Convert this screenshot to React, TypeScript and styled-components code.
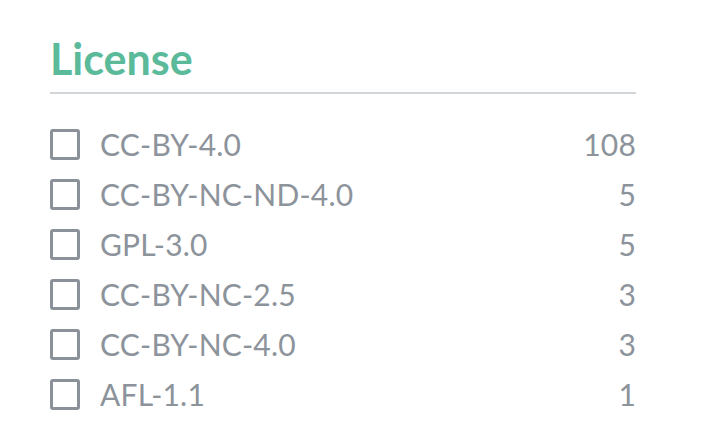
import React from "react";
import styled, { createGlobalStyle } from "styled-components";

const Global = createGlobalStyle`
  body { margin: 0; background: #fff; font-family: "Lato", "Noto Sans", sans-serif; }
`;

const Panel = styled.section`
  width: 586px;
  padding: 34px 0 0 50px;
`;

const Title = styled.h2`
  margin: 0;
  font-size: 43px;
  font-weight: 700;
  color: #5bba9a;
  line-height: 50px;
  padding-bottom: 8px;
  border-bottom: 2px solid #d3d6d9;
`;

const List = styled.ul`
  list-style: none;
  margin: 0;
  padding: 25px 0 0;
`;

const Row = styled.li`
  display: flex;
  align-items: center;
  height: 50px;
  color: #8c939b;
  font-size: 30px;
  letter-spacing: 0.2px;
`;

const Box = styled.span`
  box-sizing: border-box;
  width: 30px;
  height: 31px;
  border: 3px solid #8a9199;
  border-radius: 3px;
  margin-right: 20px;
  flex: none;
`;

const Label = styled.span`
  flex: 1;
`;

const Count = styled.span`
  text-align: right;
`;

const items: [string, number][] = [
  ["CC-BY-4.0", 108],
  ["CC-BY-NC-ND-4.0", 5],
  ["GPL-3.0", 5],
  ["CC-BY-NC-2.5", 3],
  ["CC-BY-NC-4.0", 3],
  ["AFL-1.1", 1],
];

export default function App() {
  return (
    <>
      <Global />
      <Panel>
        <Title>License</Title>
        <List>
          {items.map(([name, n]) => (
            <Row key={name}>
              <Box />
              <Label>{name}</Label>
              <Count>{n}</Count>
            </Row>
          ))}
        </List>
      </Panel>
    </>
  );
}
